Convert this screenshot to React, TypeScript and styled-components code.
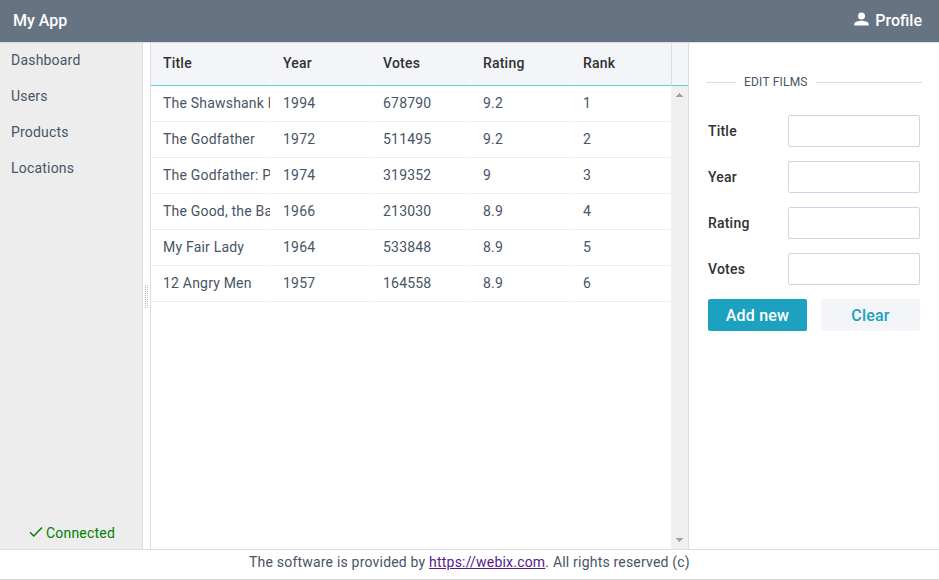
import React from "react";
import styled, { createGlobalStyle } from "styled-components";

const GlobalStyle = createGlobalStyle`
  * { box-sizing: border-box; }
  html, body { margin: 0; padding: 0; background: #fff; }
  body {
    font-family: Roboto, "Liberation Sans", sans-serif;
    font-size: 14px;
    letter-spacing: 0.2px;
    color: #475466;
  }
`;

const line = "#dadee0";

const Page = styled.div`
  width: 939px;
  height: 580px;
  display: flex;
  flex-direction: column;
  overflow: hidden;
  border-bottom: 1px solid #d2d5d7;
`;

const Toolbar = styled.header`
  flex: 0 0 43px;
  display: flex;
  align-items: center;
  justify-content: space-between;
  padding: 0 17px 2px 13px;
  background: #667383;
  border-bottom: 1px solid ${line};
  color: #fff;
  font-size: 16px;
  font-weight: 500;
  letter-spacing: 0;
`;

const Profile = styled.div`
  display: flex;
  align-items: center;
  gap: 6px;
`;

const ProfileIcon = styled.svg`
  display: block;
  width: 15px;
  height: 14px;
  margin-top: -2px;
`;

const Body = styled.div`
  flex: 1;
  min-height: 0;
  display: flex;
`;

const Sidebar = styled.nav`
  flex: 0 0 143px;
  display: flex;
  flex-direction: column;
  justify-content: space-between;
  background: #ededed;
  border-right: 1px solid ${line};
`;

const MenuItem = styled.div`
  height: 36px;
  padding-left: 11px;
  line-height: 35px;
`;

const Status = styled.div`
  display: flex;
  align-items: center;
  justify-content: center;
  gap: 3px;
  height: 32px;
  padding-left: 2px;
  color: #008000;
`;

const CheckIcon = styled.svg`
  display: block;
  width: 14px;
  height: 12px;
  margin-top: -2px;
`;

const Splitter = styled.div`
  flex: 0 0 8px;
  display: flex;
  align-items: center;
  justify-content: center;
  border-right: 1px solid ${line};
`;

const Grip = styled.svg`
  display: block;
  width: 3px;
  height: 23px;
`;

const Table = styled.section`
  flex: 0 0 538px;
  display: flex;
  flex-direction: column;
  border-right: 1px solid ${line};
`;

const TableHead = styled.div`
  flex: 0 0 43px;
  display: flex;
  background: #f4f5f9;
  color: #313131;
  font-weight: 500;
`;

const HeadCell = styled.div<{ $width: number; $last?: boolean }>`
  flex: 0 0 ${(p) => p.$width}px;
  padding-left: 12px;
  line-height: 41px;
  border-right: 1px solid ${(p) => (p.$last ? line : "#f4f5f9")};
  border-bottom: 1px solid #5fcbe0;
`;

const HeadCorner = styled.div`
  flex: 1;
  border-bottom: 1px solid #5fcbe0;
`;

const TableBody = styled.div`
  flex: 1;
  display: flex;
  min-height: 0;
`;

const Rows = styled.div`
  flex: 0 0 520px;
`;

const Row = styled.div`
  display: flex;
  height: 36px;
`;

const Cell = styled.div<{ $width: number }>`
  flex: 0 0 ${(p) => p.$width}px;
  padding-left: 12px;
  line-height: 35px;
  white-space: nowrap;
  overflow: hidden;
  border-right: 1px solid #fff;
  border-bottom: 1px solid #edeff0;
`;

const ScrollTrack = styled.div`
  flex: 1;
  display: flex;
  flex-direction: column;
  align-items: center;
  justify-content: space-between;
  padding: 7px 0;
  background: #f0f0f0;
`;

const ScrollArrow = styled.svg`
  display: block;
  width: 7px;
  height: 4px;
`;

const Form = styled.form`
  flex: 1;
  min-width: 0;
  padding: 30px 17px 0;
`;

const Legend = styled.div`
  display: flex;
  align-items: center;
  gap: 8px;
  height: 18px;
  margin-bottom: 24px;
  font-size: 12px;
  letter-spacing: 0.2px;
  white-space: nowrap;
`;

const Rule = styled.span<{ $width?: number }>`
  flex: ${(p) => (p.$width ? `0 0 ${p.$width}px` : "1")};
  height: 1px;
  margin-top: 1px;
  background: ${line};
`;

const Field = styled.label`
  display: flex;
  height: 32px;
  margin: 0 2px 14px;
  line-height: 32px;
  color: #313131;
  font-weight: 500;
`;

const FieldName = styled.span`
  flex: 0 0 80px;
`;

const Input = styled.input`
  flex: 1;
  min-width: 0;
  height: 32px;
  padding: 0 8px;
  border: 1px solid #ccd7e6;
  border-radius: 2px;
  background: #fff;
  font: inherit;
  outline: none;
`;

const Actions = styled.div`
  display: flex;
  gap: 14px;
  margin: 0 2px;
`;

const Button = styled.button<{ $primary?: boolean }>`
  flex: 1;
  height: 32px;
  padding: 1px 0 0;
  border: 0;
  border-radius: 2px;
  background: ${(p) => (p.$primary ? "#1ca1c1" : "#f4f5f9")};
  color: ${(p) => (p.$primary ? "#fff" : "#1ca1c1")};
  font: 500 16px/31px Roboto, "Liberation Sans", sans-serif;
  letter-spacing: 0.2px;
`;

const Footer = styled.footer`
  flex: 0 0 30px;
  border-top: 1px solid ${line};
  line-height: 25px;
  text-align: center;
`;

const Link = styled.a`
  color: #551a8b;
  text-decoration: underline;
`;

const columns = [
  { name: "Title", width: 120 },
  { name: "Year", width: 100 },
  { name: "Votes", width: 100 },
  { name: "Rating", width: 100 },
  { name: "Rank", width: 100 },
];

const films = [
  ["The Shawshank Redemption", "1994", "678790", "9.2", "1"],
  ["The Godfather", "1972", "511495", "9.2", "2"],
  ["The Godfather: Part II", "1974", "319352", "9", "3"],
  ["The Good, the Bad and the Ugly", "1966", "213030", "8.9", "4"],
  ["My Fair Lady", "1964", "533848", "8.9", "5"],
  ["12 Angry Men", "1957", "164558", "8.9", "6"],
];

const menu = ["Dashboard", "Users", "Products", "Locations"];
const fields = ["Title", "Year", "Rating", "Votes"];

export default function App() {
  return (
    <>
      <GlobalStyle />
      <Page>
        <Toolbar>
          <span>My App</span>
          <Profile>
            <ProfileIcon viewBox="0 0 15 14" fill="#fff">
              <circle cx="7.5" cy="4" r="3.5" />
              <path d="M0.300 13.500v-1.500C0.300 9.800 4.500 8.700 7.500 8.700s7.200 1.100 7.200 3.300v1.500z" />
            </ProfileIcon>
            <span>Profile</span>
          </Profile>
        </Toolbar>
        <Body>
          <Sidebar>
            <div>
              {menu.map((m) => (
                <MenuItem key={m}>{m}</MenuItem>
              ))}
            </div>
            <Status>
              <CheckIcon viewBox="0 0 14 12" fill="none" stroke="#008000" strokeWidth="1.5">
                <path d="M1 6.300 4.800 10 13 1.500" />
              </CheckIcon>
              <span>Connected</span>
            </Status>
          </Sidebar>
          <Splitter>
            <Grip viewBox="0 0 3 23" shapeRendering="crispEdges">
              {Array.from({ length: 12 }, (_, i) => (
                <path key={i} d={`M0 ${i * 2}h1v1h-1zM2 ${i * 2}h1v1h-1z`} fill="#b5bbc0" />
              ))}
            </Grip>
          </Splitter>
          <Table>
            <TableHead>
              {columns.map((c, i) => (
                <HeadCell key={c.name} $width={i === 4 ? c.width + 1 : c.width} $last={i === 4}>
                  {c.name}
                </HeadCell>
              ))}
              <HeadCorner />
            </TableHead>
            <TableBody>
              <Rows>
                {films.map((f) => (
                  <Row key={f[0]}>
                    {f.map((v, i) => (
                      <Cell key={i} $width={columns[i].width}>
                        {v}
                      </Cell>
                    ))}
                  </Row>
                ))}
              </Rows>
              <ScrollTrack>
                <ScrollArrow viewBox="0 0 7 4" fill="#a3a3a3" shapeRendering="crispEdges">
                  <path d="M3 0h1v1h1v1h1v1h1v1h-7v-1h1v-1h1v-1h1z" />
                </ScrollArrow>
                <ScrollArrow viewBox="0 0 7 4" fill="#a3a3a3" shapeRendering="crispEdges">
                  <path d="M0 0h7v1h-1v1h-1v1h-1v1h-1v-1h-1v-1h-1v-1h-1z" />
                </ScrollArrow>
              </ScrollTrack>
            </TableBody>
          </Table>
          <Form>
            <Legend>
              <Rule $width={30} />
              <span>EDIT FILMS</span>
              <Rule />
            </Legend>
            {fields.map((f) => (
              <Field key={f}>
                <FieldName>{f}</FieldName>
                <Input type="text" />
              </Field>
            ))}
            <Actions>
              <Button type="button" $primary>
                Add new
              </Button>
              <Button type="button">Clear</Button>
            </Actions>
          </Form>
        </Body>
        <Footer>
          The software is provided by <Link href="https://webix.com">https://webix.com</Link>. All rights
          reserved (c)
        </Footer>
      </Page>
    </>
  );
}
